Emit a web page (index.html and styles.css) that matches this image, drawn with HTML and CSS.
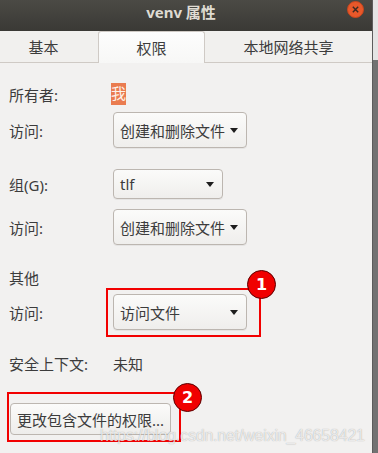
FILE: index.html
```html
<!DOCTYPE html>
<html lang="zh">
<head>
    <meta charset="UTF-8">
    <title>venv 属性</title>
    <link rel="stylesheet" href="styles.css">
</head>
<body>
    <div class="screen">
        <div class="window">
            <div class="titlebar">
                <span class="title">venv 属性</span>
                <span class="close">
                    <svg width="17" height="17" viewBox="0 0 17 17">
                        <circle cx="8.5" cy="8.5" r="8" fill="#e8582a" stroke="#c8461e" stroke-width="1"/>
                        <path d="M5.8 5.8 L11.2 11.2 M11.2 5.8 L5.8 11.2" stroke="#3a2a22" stroke-width="1.4"/>
                    </svg>
                </span>
            </div>

            <div class="tabs">
                <div class="tab tab-first">基本</div>
                <div class="tab active">权限</div>
                <div class="tab tab-last">本地网络共享</div>
            </div>

            <div class="content">
                <div class="row row-owner">
                    <span class="label">所有者:</span>
                    <span class="owner">我</span>
                </div>
                <div class="row row-access1">
                    <span class="label">访问:</span>
                    <div class="combo wide"><span>创建和删除文件</span><i class="arrow"></i></div>
                </div>
                <div class="row row-group">
                    <span class="label">组(G):</span>
                    <div class="combo narrow"><span>tlf</span><i class="arrow"></i></div>
                </div>
                <div class="row row-access2">
                    <span class="label">访问:</span>
                    <div class="combo wide"><span>创建和删除文件</span><i class="arrow"></i></div>
                </div>
                <div class="row row-other">
                    <span class="label">其他</span>
                </div>
                <div class="row row-access3">
                    <span class="label">访问:</span>
                    <div class="combo wide"><span>访问文件</span><i class="arrow"></i></div>
                </div>
                <div class="row row-context">
                    <span class="label">安全上下文:</span>
                    <span>未知</span>
                </div>
                <div class="row row-button">
                    <button class="btn">更改包含文件的权限...</button>
                </div>
            </div>

            <!-- annotations drawn over the screenshot -->
            <div class="mark mark-1"></div>
            <div class="badge badge-1">1</div>
            <div class="mark mark-2"></div>
            <div class="badge badge-2">2</div>
            <div class="watermark">https://blog.csdn.net/weixin_46658421</div>
        </div>
        <div class="edge">
            <div class="edge-top"></div>
        </div>
    </div>
</body>
</html>
```

FILE: styles.css
```css
body {
    margin: 0;
    padding: 0;
    background: #6f6f6f;
    font-family: "Noto Sans", "Noto Sans CJK SC", sans-serif;
    font-size: 15px;
    color: #3c3c3c;
}

.screen {
    display: flex;
    width: 378px;
    height: 453px;
    overflow: hidden;
}

.window {
    position: relative;
    width: 373px;
    height: 453px;
    background: #f2f1f0;
    display: flex;
    flex-direction: column;
}

.titlebar {
    position: relative;
    height: 31px;
    background: linear-gradient(#4b4a45, #3a3935);
    display: flex;
    align-items: center;
    justify-content: center;
    padding-right: 10px;
    padding-bottom: 8px;
    box-sizing: border-box;
}

.title {
    color: #dfdbd2;
    font-weight: bold;
    font-size: 15px;
}

.close {
    position: absolute;
    right: 8px;
    top: 1px;
    line-height: 0;
}

.tabs {
    display: flex;
    height: 32px;
    box-sizing: border-box;
    border-bottom: 1px solid #cfcac5;
    background: #f1f0ee;
}

.tab {
    display: flex;
    align-items: center;
    justify-content: center;
    color: #3c3c3c;
}

.tab-first {
    width: 87px;
    padding-right: 11px;
}

.tab.active {
    width: 107px;
    box-sizing: border-box;
    background: linear-gradient(#fdfdfd, #f7f7f6);
    border: 1px solid #cfcac5;
    border-bottom: none;
    border-radius: 3px 3px 0 0;
    margin-bottom: -1px;
}

.tab-last {
    flex: 1;
}

.content {
    display: flex;
    flex-direction: column;
    padding: 20px 0 0 9px;
}

.row {
    display: flex;
    align-items: center;
}

.label {
    width: 104px;
    flex-shrink: 0;
}

.row-owner { height: 22px; }
.row-access1 { margin-top: 7px; }
.row-group { margin-top: 21px; }
.row-access2 { margin-top: 10px; }
.row-other { height: 22px; margin-top: 21px; }
.row-access3 { margin-top: 6px; }
.row-context { height: 22px; margin-top: 22px; }
.row-button { margin-top: 29px; }

.owner {
    background: #ea7c50;
    color: #fdf2ea;
    padding: 0 0 1px 0;
    margin-left: -2px;
    line-height: 21px;
}

.combo {
    display: flex;
    align-items: center;
    justify-content: space-between;
    box-sizing: border-box;
    height: 36px;
    padding: 0 8px 0 6px;
    border: 1px solid #bcb6b0;
    border-radius: 4px;
    background: linear-gradient(#fbfbfa, #efeeec);
    box-shadow: 0 1px 0 rgba(0, 0, 0, 0.05);
}

.combo.wide { width: 134px; }
.combo.narrow { width: 110px; height: 30px; }

.arrow {
    width: 0;
    height: 0;
    border-left: 4.5px solid transparent;
    border-right: 4.5px solid transparent;
    border-top: 5px solid #1e1e1e;
}

.btn {
    margin-left: 1px;
    width: 161px;
    height: 32px;
    padding: 0 0 0 6px;
    text-align: left;
    font-family: "Noto Sans", "Noto Sans CJK SC", sans-serif;
    font-size: 15px;
    color: #3c3c3c;
    border: 1px solid #bcb6b0;
    border-radius: 4px;
    background: linear-gradient(#fbfbfa, #eeedeb);
}

.mark {
    position: absolute;
    border: 2px solid #f20000;
    box-sizing: border-box;
}

.mark-1 {
    left: 106px;
    top: 288px;
    width: 155px;
    height: 49px;
}

.mark-2 {
    left: 7px;
    top: 392px;
    width: 174px;
    height: 50px;
}

.badge {
    position: absolute;
    width: 29px;
    height: 29px;
    box-sizing: border-box;
    border-radius: 50%;
    background: #f00000;
    border: 1px solid #5a0000;
    color: #fff;
    font-family: "DejaVu Sans", sans-serif;
    font-weight: bold;
    font-size: 16px;
    display: flex;
    align-items: center;
    justify-content: center;
}

.badge-1 { left: 247px; top: 270px; }
.badge-2 { left: 173px; top: 383px; }

.watermark {
    position: absolute;
    left: 100px;
    top: 427px;
    font-family: "Liberation Sans", Arial, sans-serif;
    font-size: 16px;
    letter-spacing: -0.2px;
    color: rgba(255, 255, 255, 0.75);
    text-shadow: 0 0 1px rgba(0, 0, 0, 0.35);
    white-space: nowrap;
}

.edge {
    width: 5px;
    background: #727272;
    border-left: 1px solid #5c5c5c;
}

.edge-top {
    height: 60px;
    background: #e4e4e4;
}
```
